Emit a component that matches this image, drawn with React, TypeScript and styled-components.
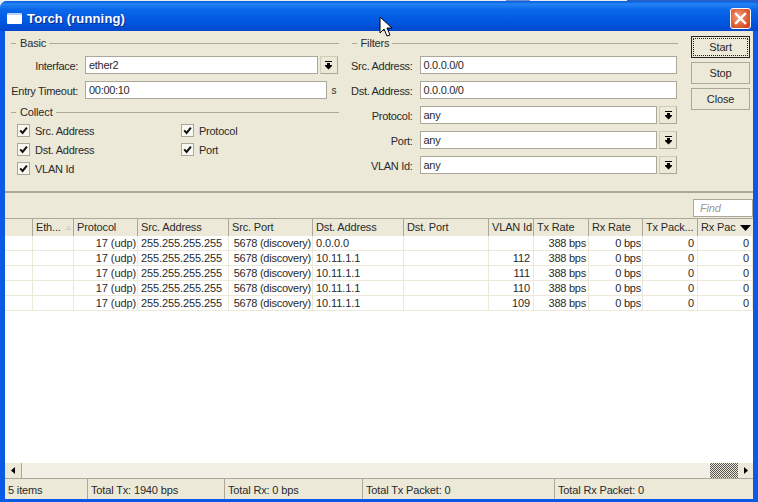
import React from "react";
import styled, { createGlobalStyle } from "styled-components";

const GlobalStyle = createGlobalStyle`
  html, body {
    margin: 0;
    padding: 0;
    width: 758px;
    height: 502px;
    overflow: hidden;
    background: #2f5fc4;
  }
  * { box-sizing: border-box; }
`;

interface Column {
  title: string;
  width: number;
  right?: boolean;
  pad?: number;
  tight?: boolean;
}

const columns: Column[] = [
  { title: "", width: 28 },
  { title: "Eth...", width: 41 },
  { title: "Protocol", width: 64, right: true, pad: 1 },
  { title: "Src. Address", width: 91 },
  { title: "Src. Port", width: 84, right: true, pad: 1, tight: true },
  { title: "Dst. Address", width: 91 },
  { title: "Dst. Port", width: 85 },
  { title: "VLAN Id", width: 45, right: true, pad: 3 },
  { title: "Tx Rate", width: 55, right: true, pad: 2, tight: true },
  { title: "Rx Rate", width: 54, right: true, pad: 1, tight: true },
  { title: "Tx Pack...", width: 55, right: true, pad: 3 },
  { title: "Rx Pac", width: 55, right: true, pad: 3 },
];

const rows: string[][] = [
  ["", "", "17 (udp)", "255.255.255.255", "5678 (discovery)", "0.0.0.0", "", "", "388 bps", "0 bps", "0", "0"],
  ["", "", "17 (udp)", "255.255.255.255", "5678 (discovery)", "10.11.1.1", "", "112", "388 bps", "0 bps", "0", "0"],
  ["", "", "17 (udp)", "255.255.255.255", "5678 (discovery)", "10.11.1.1", "", "111", "388 bps", "0 bps", "0", "0"],
  ["", "", "17 (udp)", "255.255.255.255", "5678 (discovery)", "10.11.1.1", "", "110", "388 bps", "0 bps", "0", "0"],
  ["", "", "17 (udp)", "255.255.255.255", "5678 (discovery)", "10.11.1.1", "", "109", "388 bps", "0 bps", "0", "0"],
];

const DropArrow: React.FC = () => (
  <svg width="9" height="9" viewBox="0 0 9 9">
    <path d="M1 0h7v1H1zM3 2h3v2h2v1L4.5 8.5 1 5V4h2z" fill="#000" />
  </svg>
);

const Check: React.FC = () => (
  <svg width="9" height="9" viewBox="0 0 9 9">
    <path d="M1.2 4.4l2.4 2.5L7.9 1.6" fill="none" stroke="#111" strokeWidth="2" />
  </svg>
);

const App: React.FC = () => (
  <>
    <GlobalStyle />
    <Screen>
      <Window>
        <TitleBar>
          <TitleIcon />
          <Title>Torch (running)</Title>
          <CloseButton>
            <svg width="13" height="13" viewBox="0 0 13 13">
              <path d="M2 2l9 9M11 2l-9 9" stroke="#fff" strokeWidth="2.4" strokeLinecap="square" />
            </svg>
          </CloseButton>
          <Cursor width="14" height="22" viewBox="0 0 14 22">
            <path d="M1 1v16l4-4 3 7 3-1-3-7h5z" fill="#fff" stroke="#000" strokeWidth="1" />
          </Cursor>
        </TitleBar>
        <Body>
          <FormArea>
            <LeftForm>
              <GroupTitle>Basic</GroupTitle>
              <FormRow>
                <LeftLabel>Interface:</LeftLabel>
                <Input>ether2</Input>
                <DropButton><DropArrow /></DropButton>
              </FormRow>
              <FormRow>
                <LeftLabel>Entry Timeout:</LeftLabel>
                <Input>00:00:10</Input>
                <Unit>s</Unit>
              </FormRow>
              <CollectTitle>Collect</CollectTitle>
              <Checks>
                <CheckItem><CheckBox><Check /></CheckBox>Src. Address</CheckItem>
                <CheckItem><CheckBox><Check /></CheckBox>Protocol</CheckItem>
                <CheckItem><CheckBox><Check /></CheckBox>Dst. Address</CheckItem>
                <CheckItem><CheckBox><Check /></CheckBox>Port</CheckItem>
                <CheckItem><CheckBox><Check /></CheckBox>VLAN Id</CheckItem>
              </Checks>
            </LeftForm>
            <RightForm>
              <GroupTitle>Filters</GroupTitle>
              <FormRow>
                <RightLabel>Src. Address:</RightLabel>
                <Input>0.0.0.0/0</Input>
              </FormRow>
              <FormRow>
                <RightLabel>Dst. Address:</RightLabel>
                <Input>0.0.0.0/0</Input>
              </FormRow>
              <FormRow>
                <RightLabel>Protocol:</RightLabel>
                <Input>any</Input>
                <DropButton><DropArrow /></DropButton>
              </FormRow>
              <FormRow>
                <RightLabel>Port:</RightLabel>
                <Input>any</Input>
                <DropButton><DropArrow /></DropButton>
              </FormRow>
              <FormRow>
                <RightLabel>VLAN Id:</RightLabel>
                <Input>any</Input>
                <DropButton><DropArrow /></DropButton>
              </FormRow>
            </RightForm>
            <Buttons>
              <Button primary><FocusRing>Start</FocusRing></Button>
              <Button>Stop</Button>
              <Button>Close</Button>
            </Buttons>
          </FormArea>
          <FindBar>
            <FindInput>Find</FindInput>
          </FindBar>
          <Table>
            <HeaderRow>
              {columns.map((column, i) => (
                <HeaderCell key={i} width={column.width}>
                  {column.title}
                  {i === 1 && <SortMark>▵</SortMark>}
                </HeaderCell>
              ))}
              <ColumnMenu>
                <svg width="11" height="6" viewBox="0 0 11 6">
                  <path d="M0 0h11L5.5 6z" fill="#000" />
                </svg>
              </ColumnMenu>
            </HeaderRow>
            <TableBody>
              {rows.map((row, r) => (
                <Row key={r}>
                  {row.map((cell, c) => (
                    <Cell
                      key={c}
                      width={columns[c].width}
                      $right={columns[c].right}
                      $pad={columns[c].pad}
                      $tight={columns[c].tight}
                    >
                      {cell}
                    </Cell>
                  ))}
                </Row>
              ))}
            </TableBody>
            <ScrollBar>
              <ScrollButton>
                <svg width="4" height="7" viewBox="0 0 4 7"><path d="M4 0v7L0 3.5z" fill="#000" /></svg>
              </ScrollButton>
              <ScrollTrack />
              <ScrollThumb />
              <ScrollEndButton>
                <svg width="4" height="7" viewBox="0 0 4 7"><path d="M0 0v7l4-3.5z" fill="#000" /></svg>
              </ScrollEndButton>
            </ScrollBar>
          </Table>
          <StatusBar>
            <StatusCell width={83}>5 items</StatusCell>
            <StatusCell width={137}>Total Tx: 1940 bps</StatusCell>
            <StatusCell width={138}>Total Rx: 0 bps</StatusCell>
            <StatusCell width={192}>Total Tx Packet: 0</StatusCell>
            <StatusCell width={198}>Total Rx Packet: 0</StatusCell>
          </StatusBar>
        </Body>
      </Window>
    </Screen>
  </>
);

export default App;

// Styled

const Screen = styled.div`
  width: 758px;
  height: 502px;
  padding-top: 1px;
  font-family: "Liberation Sans", Arial, sans-serif;
  font-size: 11px;
  letter-spacing: -0.15px;
  color: #2a2a2a;
  background: linear-gradient(
    90deg,
    #e8eef8 0 506px,
    #6f8fd0 506px 530px,
    #e8eef8 530px 627px,
    #2f5fc4 627px
  );
`;

const Window = styled.div`
  height: 501px;
  display: flex;
  flex-direction: column;
  border-radius: 7px 7px 0 0;
  background: #0a5ae6;
  padding: 0 5px 3px 5px;
  overflow: hidden;
`;

const TitleBar = styled.div`
  position: relative;
  height: 30px;
  margin: 0 -5px;
  padding: 4px 7px 0 7px;
  display: flex;
  align-items: center;
  background: linear-gradient(180deg, #0a5ad8 0%, #2484f4 10%, #0a68ea 28%, #0056e0 70%, #0348cc 100%);
`;

const TitleIcon = styled.div`
  width: 15px;
  height: 11px;
  background: #fff;
  border-top: 2px solid #b8d4f8;
  border-radius: 1px;
  margin-right: 5px;
`;

const Title = styled.div`
  flex: 1;
  font-size: 13px;
  font-weight: bold;
  letter-spacing: 0.15px;
  color: #fff;
  text-shadow: 1px 1px 0 #0a2a80;
`;

const CloseButton = styled.div`
  width: 21px;
  height: 21px;
  display: flex;
  align-items: center;
  justify-content: center;
  border: 1px solid #fff;
  border-radius: 3px;
  background: radial-gradient(circle at 40% 40%, #f0a080 0%, #e0603a 55%, #c63a18 100%);
`;

const Cursor = styled.svg`
  position: absolute;
  left: 379px;
  top: 15px;
`;

const Body = styled.div`
  flex: 1;
  display: flex;
  flex-direction: column;
  background: #ece9d8;
  min-height: 0;
`;

const FormArea = styled.div`
  height: 162px;
  display: flex;
  border-bottom: 2px solid #aca899;
  padding: 5px 3px 0 5px;
`;

const LeftForm = styled.div`
  width: 329px;
  margin-right: 12px;
`;

const RightForm = styled.div`
  width: 328px;
  margin-right: 13px;
`;

const GroupTitle = styled.div`
  display: flex;
  align-items: center;
  height: 14px;
  padding-left: 10px;
  gap: 3px;
  position: relative;
  margin-bottom: 6px;

  &::before {
    content: "";
    position: absolute;
    left: 1px;
    width: 5px;
    height: 1px;
    background: #aca899;
  }

  &::after {
    content: "";
    flex: 1;
    height: 1px;
    background: #aca899;
  }
`;

const CollectTitle = styled(GroupTitle)`
  margin-top: -1px;
  margin-bottom: 2px;
`;

const FormRow = styled.div`
  display: flex;
  align-items: center;
  height: 18px;
  margin-bottom: 7px;
  padding-right: 1px;
`;

const LeftLabel = styled.div`
  width: 68px;
  flex-shrink: 0;
  display: flex;
  justify-content: flex-end;
  margin-right: 7px;
  padding-top: 1px;
  letter-spacing: -0.3px;
  white-space: nowrap;
`;

const RightLabel = styled(LeftLabel)`
  width: 62px;
`;

const Input = styled.div`
  flex: 1;
  height: 18px;
  line-height: 17px;
  background: #fff;
  border: 1px solid #aca899;
  padding-left: 3px;
  letter-spacing: -0.3px;
  white-space: nowrap;
`;

const DropButton = styled.div`
  width: 18px;
  height: 18px;
  margin-left: 2px;
  display: flex;
  align-items: center;
  justify-content: center;
  border: 1px solid #d0ccb8;
  border-right-color: #aca899;
  border-bottom-color: #aca899;
  background: #ece9d8;
`;

const Unit = styled.div`
  width: 6px;
  margin-left: 5px;
  font-size: 10px;
`;

const Checks = styled.div`
  display: grid;
  grid-template-columns: 164px 1fr;
  grid-auto-rows: 19px;
  padding-left: 7px;
  letter-spacing: -0.25px;
`;

const CheckItem = styled.div`
  display: flex;
  align-items: center;
  gap: 5px;
`;

const CheckBox = styled.div`
  width: 13px;
  height: 13px;
  display: flex;
  align-items: center;
  justify-content: center;
  background: #f8f7f0;
  border: 1px solid #aca899;
`;

const Buttons = styled.div`
  display: flex;
  flex-direction: column;
  gap: 4px;
  width: 59px;
`;

const Button = styled.div<{ primary?: boolean }>`
  height: 22px;
  display: flex;
  align-items: center;
  justify-content: center;
  background: #ece9d8;
  border: 1px solid ${({ primary }) => (primary ? "#222" : "#aca899")};
  padding: 1px;
`;

const FocusRing = styled.div`
  flex: 1;
  align-self: stretch;
  display: flex;
  align-items: center;
  justify-content: center;
  border: 1px dotted #222;
`;

const FindBar = styled.div`
  height: 25px;
  display: flex;
  justify-content: flex-end;
  align-items: flex-end;
  padding-bottom: 1px;
`;

const FindInput = styled.div`
  width: 60px;
  height: 18px;
  line-height: 16px;
  background: #fff;
  border: 1px solid #aca899;
  padding-left: 6px;
  font-style: italic;
  color: #999;
`;

const Table = styled.div`
  flex: 1;
  min-height: 0;
  display: flex;
  flex-direction: column;
  background: #fff;
`;

const HeaderRow = styled.div`
  display: flex;
  height: 18px;
  background: #ece9d8;
  border-top: 1px solid #aca899;
  position: relative;
`;

const HeaderCell = styled.div<{ width: number }>`
  width: ${({ width }) => width}px;
  flex-shrink: 0;
  padding-left: 3px;
  line-height: 16px;
  border-right: 1px solid #aca899;
  white-space: nowrap;
  overflow: hidden;
  position: relative;
`;

const SortMark = styled.span`
  position: absolute;
  right: 2px;
  top: 0;
  color: #bbb;
  font-size: 9px;
`;

const ColumnMenu = styled.div`
  position: absolute;
  right: 0;
  top: 0;
  width: 16px;
  height: 17px;
  display: flex;
  align-items: center;
  justify-content: center;
  background: #ece9d8;
`;

const TableBody = styled.div`
  flex: 1;
  min-height: 0;
  overflow: hidden;
`;

const Row = styled.div`
  display: flex;
  height: 15px;
  border-bottom: 1px solid #ece9d8;
`;

const Cell = styled.div<{ width: number; $right?: boolean; $pad?: number; $tight?: boolean }>`
  width: ${({ width }) => width}px;
  flex-shrink: 0;
  line-height: 14px;
  padding: 0 ${({ $pad }) => $pad ?? 3}px 0 3px;
  border-right: 1px solid #ece9d8;
  text-align: ${({ $right }) => ($right ? "right" : "left")};
  letter-spacing: ${({ $tight }) => ($tight ? "-0.25px" : "-0.1px")};
  white-space: nowrap;
  overflow: hidden;
`;

const ScrollBar = styled.div`
  height: 16px;
  display: flex;
  background: #f2f0e4;
  border-bottom: 1px solid #aca899;
`;

const ScrollButton = styled.div`
  width: 17px;
  display: flex;
  align-items: center;
  justify-content: center;
  background: #ece9d8;
  border-right: 1px solid #aca899;
`;

const ScrollEndButton = styled(ScrollButton)`
  width: 15px;
  border-right: none;
`;

const ScrollTrack = styled.div`
  flex: 1;
`;

const ScrollThumb = styled.div`
  width: 28px;
  background: repeating-conic-gradient(#555 0% 25%, #ece9d8 0% 50%) 0 0 / 2px 2px;
`;

const StatusBar = styled.div`
  height: 20px;
  display: flex;
`;

const StatusCell = styled.div<{ width: number }>`
  width: ${({ width }) => width}px;
  flex-shrink: 0;
  line-height: 22px;
  padding-left: 3px;
  border-right: 1px solid #aca899;
  white-space: nowrap;

  &:last-child {
    border-right: none;
  }
`;
